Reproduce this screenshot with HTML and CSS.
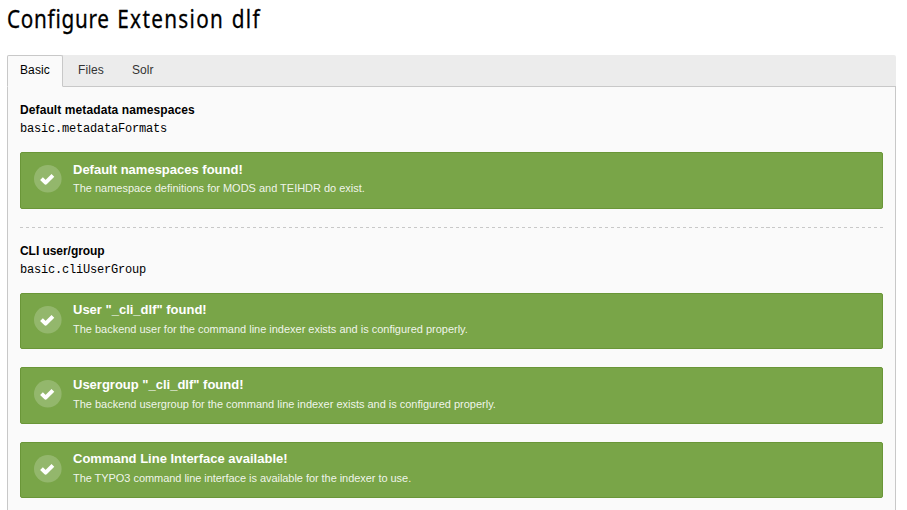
FILE: index.html
```html
<!DOCTYPE html>
<html lang="en">
<head>
<meta charset="utf-8">
<title>Configure Extension dlf</title>
<link rel="stylesheet" href="styles.css">
</head>
<body>
<svg class="sprite" aria-hidden="true"><symbol id="check" viewBox="0 0 28 28"><circle cx="13.8" cy="13.8" r="13.8" fill="#fff" fill-opacity=".2"/><path d="M7.5 13.6 11.6 17.7 18.9 10.4" fill="none" stroke="#fff" stroke-width="3.9" stroke-linejoin="round"/></symbol></svg>
<h1><span><span class="narrow">Configure</span> Extension dlf</span></h1>
<nav class="tabs">
  <a class="tab active">Basic</a>
  <a class="tab">Files</a>
  <a class="tab">Solr</a>
</nav>
<main class="panel">
  <section>
    <h2 class="spaced">Default metadata namespaces</h2>
    <code>basic.metadataFormats</code>
    <div class="callout"><svg class="icon"><use href="#check"/></svg><div><h3>Default namespaces found!</h3><p>The namespace definitions for MODS and TEIHDR do exist.</p></div></div>
  </section>
  <div class="divider"></div>
  <section>
    <h2>CLI user/group</h2>
    <code>basic.cliUserGroup</code>
    <div class="callout"><svg class="icon"><use href="#check"/></svg><div><h3>User "_cli_dlf" found!</h3><p>The backend user for the command line indexer exists and is configured properly.</p></div></div>
    <div class="callout"><svg class="icon"><use href="#check"/></svg><div><h3>Usergroup "_cli_dlf" found!</h3><p>The backend usergroup for the command line indexer exists and is configured properly.</p></div></div>
    <div class="callout"><svg class="icon"><use href="#check"/></svg><div><h3>Command Line Interface available!</h3><p class="compact">The TYPO3 command line interface is available for the indexer to use.</p></div></div>
  </section>
</main>
</body>
</html>
```
FILE: styles.css
```css
* { box-sizing: border-box; }
html { height: 100%; overflow: hidden; }
body {
  margin: 0;
  padding: 0 11px 0 7px;
  height: 100%;
  display: flex;
  flex-direction: column;
  overflow: hidden;
  background: #fff;
  color: #000;
  font: 12px/18px "Liberation Sans", Arial, sans-serif;
}
.sprite { display: none; }
h1, h2, h3, p { margin: 0; }
h1 {
  flex: none;
  height: 55px;
  font: 400 26px/36px "Noto Sans", sans-serif;
  white-space: nowrap;
}
h1 > span {
  display: inline-block;
  letter-spacing: 1.65px;
  word-spacing: 1px;
  -webkit-text-stroke: .3px #000;
  transform: scaleX(.797);
  transform-origin: 0 0;
}
h1 .narrow { letter-spacing: .9px; }
.tabs {
  flex: none;
  display: flex;
  gap: 2px;
  height: 32px;
  background: #ececec;
  border-bottom: 1px solid #c8c8c8;
  border-radius: 2px 2px 0 0;
}
.tab {
  height: 31px;
  padding: 5px 12px;
  border: 1px solid transparent;
  color: #333;
  letter-spacing: .12px;
}
.tab.active {
  height: 32px;
  background: #fafafa;
  border-color: #c8c8c8;
  border-bottom-color: #fafafa;
  border-radius: 2px 2px 0 0;
  color: #000;
}
.panel {
  flex: 1;
  min-height: 0;
  overflow: hidden;
  padding: 14px 12px 0;
  background: #fafafa;
  border: 1px solid #c8c8c8;
  border-width: 0 1px;
}
h2 { font-size: 12px; line-height: 18px; letter-spacing: -.05px; }
h2.spaced { letter-spacing: .1px; }
code {
  display: block;
  margin-bottom: 14px;
  padding-top: 1px;
  font: 12px/18px "Liberation Mono", monospace;
  letter-spacing: -.2px;
}
.callout {
  display: flex;
  gap: 11px;
  height: 56.6px;
  margin-bottom: 18px;
  padding: 6.7px 13px 0;
  background: #79a548;
  border: 1px solid #6a9638;
  border-radius: 2px;
  color: #fff;
}
.icon { flex: none; width: 28px; height: 28px; margin-top: 5.3px; }
h3 { font-size: 13px; line-height: 19px; }
.callout p {
  padding-top: .7px;
  font-size: 11px;
  line-height: 19px;
  letter-spacing: -.015px;
  color: rgba(255,255,255,.9);
}
.callout .compact { letter-spacing: -.05px; }
.divider {
  height: 1px;
  margin-bottom: 14px;
  background: repeating-linear-gradient(90deg, #c8c8c8 0 3px, transparent 3px 5.972px);
}
```
